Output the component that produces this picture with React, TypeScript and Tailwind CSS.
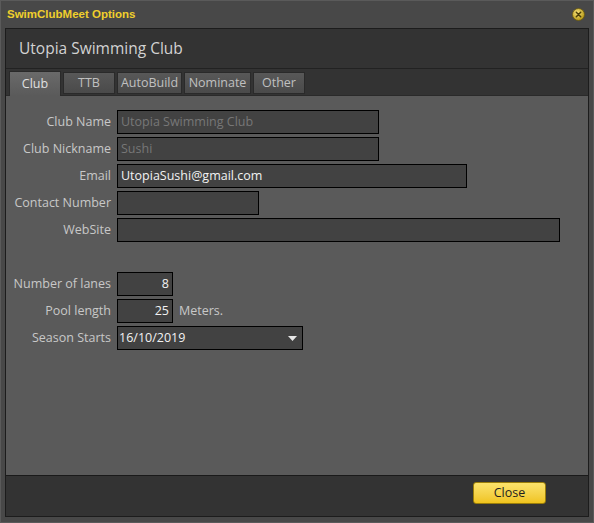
const font = { fontFamily: '"Open Sans", "Noto Sans", sans-serif' }

const Field = ({ label, value, w, disabled, right, suffix }: { label: string; value?: string; w: string; disabled?: boolean; right?: boolean; suffix?: string }) => (
  <div className="flex items-center h-[24px]">
    <div className="w-[105px] text-right text-[12.5px] text-[#c8c8c8] whitespace-nowrap">{label}</div>
    <div
      className={`ml-[6px] h-[24px] bg-[#424242] border border-black flex items-center px-[3px] text-[12.5px] ${w} ${disabled ? 'text-[#777]' : 'text-[#f2f2f2]'} ${right ? 'justify-end' : ''}`}
    >
      {value}
    </div>
    {suffix && <span className="ml-[6px] text-[12.5px] text-[#c8c8c8]">{suffix}</span>}
  </div>
)

const Tab = ({ label, w, active }: { label: string; w: string; active?: boolean }) => (
  <div
    className={
      active
        ? `${w} h-[25px] -mb-px flex items-center justify-center text-[12.5px] text-[#e0e0e0] bg-gradient-to-b from-[#6a6a6a] to-[#5a5a5a] border border-b-0 border-[#2a2a2a] relative z-10`
        : `${w} h-[22px] mb-[1px] flex items-center justify-center text-[12.5px] text-[#c0c0c0] bg-gradient-to-b from-[#585858] to-[#4a4a4a] border border-[#2a2a2a]`
    }
  >
    {label}
  </div>
)

export default function App() {
  return (
    <div className="w-[594px] h-[523px] bg-[#484848] border border-[#5a5a5a] flex flex-col overflow-hidden" style={font}>
      <div className="h-[27px] shrink-0 flex items-center justify-between pl-[6px] pr-[8px]">
        <span className="text-[11.5px] font-bold text-[#f0cf2c]" style={{ fontFamily: '"Liberation Sans", Arial, sans-serif' }}>
          SwimClubMeet Options
        </span>
        <svg width="13" height="13" viewBox="0 0 13 13" className="mt-[-1px]">
          <defs>
            <radialGradient id="g" cx="40%" cy="35%" r="65%">
              <stop offset="0%" stopColor="#f6e27a" />
              <stop offset="100%" stopColor="#b89a18" />
            </radialGradient>
          </defs>
          <circle cx="6.5" cy="6.5" r="6" fill="url(#g)" stroke="#6b5a10" strokeWidth="0.8" />
          <path d="M4.3 4.3 L8.7 8.7 M8.7 4.3 L4.3 8.7" stroke="#4a3e08" strokeWidth="1.5" strokeLinecap="round" />
        </svg>
      </div>

      <div className="flex-1 mx-[4px] mb-[5px] border border-[#1c1c1c] flex flex-col">
        <div className="h-[40px] shrink-0 bg-[#333333] flex items-center pl-[13px] text-[15.5px] text-[#d2d2d2] border-b border-[#222]">
          Utopia Swimming Club
        </div>

        <div className="h-[26px] shrink-0 bg-[#333333] flex items-end gap-[2px] pl-[3px]">
          <Tab label="Club" w="w-[52px]" active />
          <Tab label="TTB" w="w-[52px]" />
          <Tab label="AutoBuild" w="w-[65px]" />
          <Tab label="Nominate" w="w-[67px]" />
          <Tab label="Other" w="w-[52px]" />
        </div>

        <div className="flex-1 bg-[#5a5a5a] border-t border-[#2a2a2a] pt-[14px] flex flex-col">
          <div className="flex flex-col gap-[3px]">
            <Field label="Club Name" value="Utopia Swimming Club" w="w-[262px]" disabled />
            <Field label="Club Nickname" value="Sushi" w="w-[262px]" disabled />
            <Field label="Email" value="UtopiaSushi@gmail.com" w="w-[350px]" />
            <Field label="Contact Number" w="w-[142px]" />
            <Field label="WebSite" w="w-[443px]" />
          </div>
          <div className="flex flex-col gap-[3px] mt-[30px]">
            <Field label="Number of lanes" value="8" w="w-[56px]" right />
            <Field label="Pool length" value="25" w="w-[56px]" right suffix="Meters." />
            <div className="flex items-center h-[24px]">
              <div className="w-[105px] text-right text-[12.5px] text-[#c8c8c8]">Season Starts</div>
              <div className="ml-[6px] w-[186px] h-[24px] bg-[#424242] border border-black flex items-center justify-between pl-[1px] pr-[5px] text-[12.5px] text-[#f2f2f2]">
                <span>16/10/2019</span>
                <svg width="9" height="5" viewBox="0 0 9 5">
                  <path d="M0 0 H9 L4.5 5 Z" fill="#e8e8e8" />
                </svg>
              </div>
            </div>
          </div>
        </div>

        <div className="h-[41px] shrink-0 bg-[#333333] border-t border-[#1a1a1a] flex items-start justify-end pr-[42px] pt-[6px]">
          <button className="w-[73px] h-[22px] rounded-[3px] border border-[#9a7d0a] bg-gradient-to-b from-[#fbe36a] to-[#f0c41a] text-[12.5px] text-[#1e1e1e] flex items-center justify-center">
            Close
          </button>
        </div>
      </div>
    </div>
  )
}
